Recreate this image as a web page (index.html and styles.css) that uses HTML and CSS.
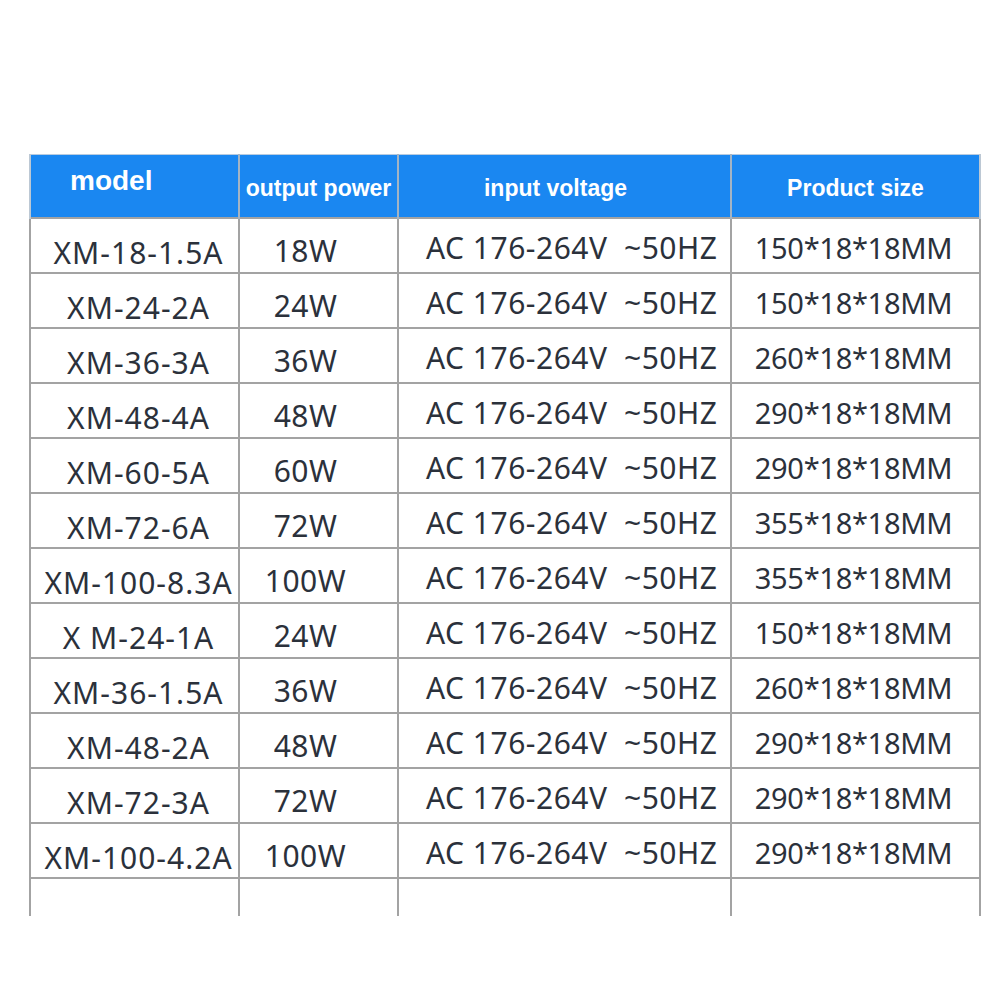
FILE: index.html
```html
<!DOCTYPE html>
<html>
<head>
<meta charset="utf-8">
<link rel="stylesheet" href="styles.css">
</head>
<body>
<div class="page">
<table class="spec">
<colgroup>
<col class="c1"><col class="c2"><col class="c3"><col class="c4">
</colgroup>
<thead>
<tr>
<th class="h-model">model</th>
<th class="h-power">output power</th>
<th class="h-volt">input voltage</th>
<th class="h-size">Product size</th>
</tr>
</thead>
<tbody>
<tr><td class="model">XM-18-1.5A</td><td class="power">18W</td><td class="volt">AC 176-264V&nbsp; ~50HZ</td><td class="size">150*18*18MM</td></tr>
<tr><td class="model">XM-24-2A</td><td class="power">24W</td><td class="volt">AC 176-264V&nbsp; ~50HZ</td><td class="size">150*18*18MM</td></tr>
<tr><td class="model">XM-36-3A</td><td class="power">36W</td><td class="volt">AC 176-264V&nbsp; ~50HZ</td><td class="size">260*18*18MM</td></tr>
<tr><td class="model">XM-48-4A</td><td class="power">48W</td><td class="volt">AC 176-264V&nbsp; ~50HZ</td><td class="size">290*18*18MM</td></tr>
<tr><td class="model">XM-60-5A</td><td class="power">60W</td><td class="volt">AC 176-264V&nbsp; ~50HZ</td><td class="size">290*18*18MM</td></tr>
<tr><td class="model">XM-72-6A</td><td class="power">72W</td><td class="volt">AC 176-264V&nbsp; ~50HZ</td><td class="size">355*18*18MM</td></tr>
<tr><td class="model">XM-100-8.3A</td><td class="power">100W</td><td class="volt">AC 176-264V&nbsp; ~50HZ</td><td class="size">355*18*18MM</td></tr>
<tr><td class="model">X M-24-1A</td><td class="power">24W</td><td class="volt">AC 176-264V&nbsp; ~50HZ</td><td class="size">150*18*18MM</td></tr>
<tr><td class="model">XM-36-1.5A</td><td class="power">36W</td><td class="volt">AC 176-264V&nbsp; ~50HZ</td><td class="size">260*18*18MM</td></tr>
<tr><td class="model">XM-48-2A</td><td class="power">48W</td><td class="volt">AC 176-264V&nbsp; ~50HZ</td><td class="size">290*18*18MM</td></tr>
<tr><td class="model">XM-72-3A</td><td class="power">72W</td><td class="volt">AC 176-264V&nbsp; ~50HZ</td><td class="size">290*18*18MM</td></tr>
<tr><td class="model">XM-100-4.2A</td><td class="power">100W</td><td class="volt">AC 176-264V&nbsp; ~50HZ</td><td class="size">290*18*18MM</td></tr>
<tr class="empty"><td></td><td></td><td></td><td></td></tr>
</tbody>
</table>
</div>
</body>
</html>
```
FILE: styles.css
```css
html, body {
  margin: 0;
  padding: 0;
  background: #ffffff;
}
.page {
  padding: 154px 0 0 29px;
}
.spec {
  border-collapse: collapse;
  table-layout: fixed;
  width: 950px;
}
.c1 { width: 209px; }
.c2 { width: 159px; }
.c3 { width: 333px; }
.c4 { width: 249px; }

.spec th {
  background: #1a87f1;
  color: #ffffff;
  font-family: "Liberation Sans", Arial, sans-serif;
  font-weight: 700;
  font-size: 23px;
  height: 63px;
  padding: 0;
  border-left: 2px solid #a4b4c4;
  border-top: 1px solid #b7cbe0;
  text-align: center;
  vertical-align: middle;
  box-sizing: border-box;
}
.spec th:first-child { border-left: 2px solid #bcc8d4; }
.spec th:last-child { border-right: 2px solid #bcc8d4; }
.spec th.h-model {
  font-size: 28px;
  text-align: left;
  padding-left: 39px;
  padding-bottom: 10px;
}
.spec th.h-power { padding-top: 6px; }
.spec th.h-volt { padding-top: 6px; padding-right: 18px; }
.spec th.h-size { padding-top: 6px; }

.spec td {
  font-family: "Noto Sans", "Open Sans", sans-serif;
  font-size: 30px;
  color: #2b313b;
  height: 55px;
  padding: 0;
  border: 2px solid #a3a3a3;
  text-align: center;
  vertical-align: middle;
  white-space: nowrap;
  box-sizing: border-box;
  line-height: 1;
  letter-spacing: 0.5px;
}
.spec td.model { padding: 16px 0 0 8px; letter-spacing: 1px; }
.spec td.power { padding: 12px 26px 0 0; }
.spec td.volt { text-align: left; padding: 5px 0 0 27px; }
.spec td.size { padding: 5px 4px 0 0; font-size: 29px; letter-spacing: -0.3px; }
.spec tr.empty td {
  height: 38px;
  padding: 0;
  border-bottom: none;
}
```
